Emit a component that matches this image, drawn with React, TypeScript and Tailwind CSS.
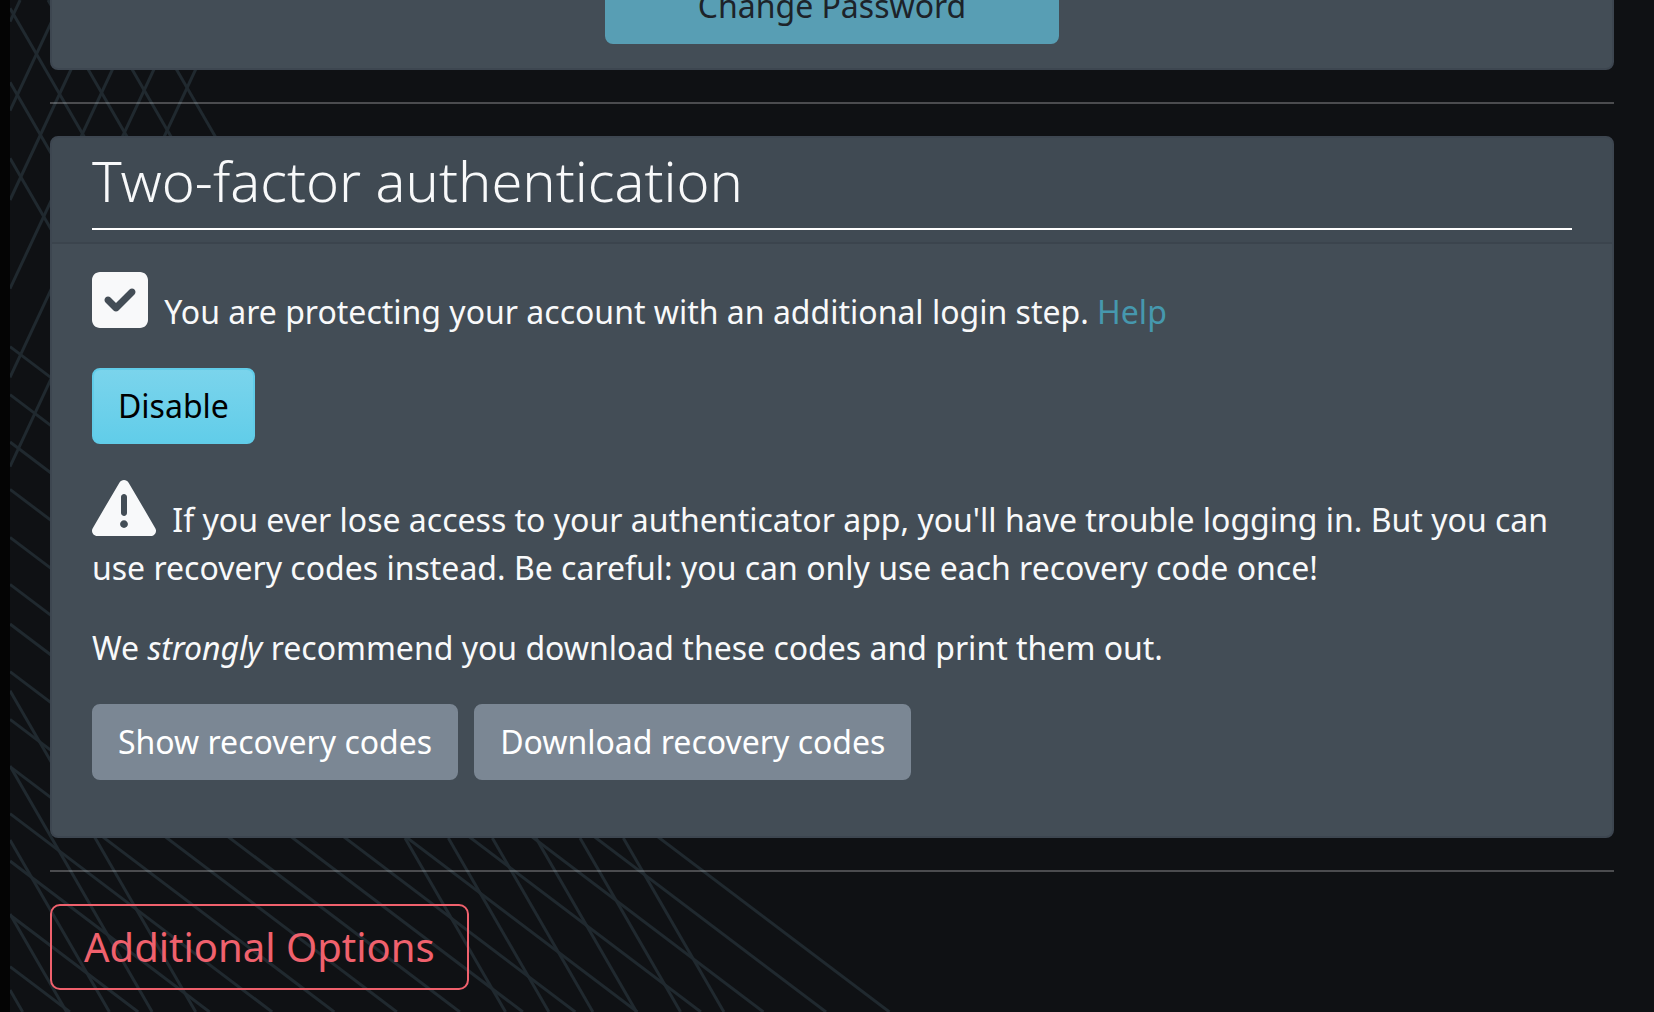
import type { ReactNode } from 'react'

type Line = [number, number, number, number]

// Extend a line of the given slope from a start point down to a final y.
const run = (x: number, y: number, slope: number, endY: number): Line => [
  x,
  y,
  x + (endY - y) / slope,
  endY,
]

const BOTTOM = 3036

const lines: Line[] = [
  // Upper lattice, falling to the right
  ...[25, 247, 475].map((y) => run(30, y, 1.73, 760)),
  ...[144, 276, 409].map((x) => run(x, 0, 1.73, 760)),
  // Upper lattice, falling to the left
  ...[65, 332, 600, 866, 1132, 1400].map((y): Line => [30, y, 30 + y / 2.14, 0]),
  // Shallow sweep
  ...[1040, 1184, 1326, 1468, 1612, 1753, 1872, 2015, 2158, 2300, 2441, 2583, 2745, 2900].map((y) =>
    run(30, y, 0.7565, BOTTOM),
  ),
  // Steep lower lines
  ...[2072, 2298, 2520, 2742, 2970].map((y) => run(30, y, 1.73, BOTTOM)),
  ...[1215, 1345, 1477, 1608, 1740, 1870].map((x) => run(x, 2514, 1.73, BOTTOM)),
]

function Lattice() {
  return (
    <svg
      aria-hidden="true"
      className="pointer-events-none absolute top-0 left-0"
      width="1000"
      height="1012"
      viewBox="0 0 3000 3036"
      stroke="#20292f"
      strokeWidth="9"
    >
      {lines.map(([x1, y1, x2, y2], i) => (
        <line key={i} x1={x1} y1={y1} x2={x2} y2={y2} />
      ))}
    </svg>
  )
}

function CheckIcon() {
  return (
    <svg
      aria-hidden="true"
      className="mr-2 inline h-16 w-14 align-[-8px]"
      viewBox="0 0 448 512"
      fill="currentColor"
    >
      <path d="M384 32C419.3 32 448 60.65 448 96V416C448 451.3 419.3 480 384 480H64C28.65 480 0 451.3 0 416V96C0 60.65 28.65 32 64 32H384zM339.8 211.8C350.7 200.9 350.7 183.1 339.8 172.2C328.9 161.3 311.1 161.3 300.2 172.2L192 280.4L147.8 236.2C136.9 225.3 119.1 225.3 108.2 236.2C97.27 247.1 97.27 264.9 108.2 275.8L172.2 339.8C183.1 350.7 200.9 350.7 211.8 339.8L339.8 211.8z" />
    </svg>
  )
}

function WarningIcon() {
  return (
    <svg
      aria-hidden="true"
      className="mr-2 inline size-16 align-[-8px]"
      viewBox="0 0 512 512"
      fill="currentColor"
    >
      <path d="M506.3 417l-213.3-364c-16.33-28-57.54-28-73.98 0l-213.2 364C-10.59 444.9 9.849 480 42.74 480h426.6C502.1 480 522.6 445 506.3 417zM232 168c0-13.25 10.75-24 24-24S280 154.8 280 168v128c0 13.25-10.75 24-23.1 24S232 309.3 232 296V168zM256 416c-17.36 0-31.44-14.08-31.44-31.44c0-17.36 14.07-31.44 31.44-31.44s31.44 14.08 31.44 31.44C287.4 401.9 273.4 416 256 416z" />
    </svg>
  )
}

function Card({ children }: { children: ReactNode }) {
  return (
    <section className="overflow-hidden rounded-lg border-2 border-[#3d4650] bg-[#434d56]">{children}</section>
  )
}

function SecondaryButton({ children }: { children: ReactNode }) {
  return (
    <button
      type="button"
      className="rounded-lg border-2 border-[#7b8794] bg-[#7b8794] px-6 py-3 text-[32px] leading-[48px] text-white"
    >
      {children}
    </button>
  )
}

export default function App() {
  return (
    <div className="relative flex min-h-screen overflow-hidden bg-[#0f1114] font-['Noto_Sans',sans-serif] text-[32px] leading-[48px] text-[#f8f9fa]">
      <Lattice />
      <div className="relative w-2.5 shrink-0 bg-[#040404]" />
      <main className="relative -mt-10 min-w-0 flex-1 px-10">
        <Card>
          <div className="flex justify-center pt-1.5 pb-6">
            <button
              type="button"
              className="w-[454px] rounded-lg border-2 border-[#589eb4] bg-[#589eb4] py-3 text-[#1d2329]"
            >
              Change Password
            </button>
          </div>
        </Card>

        <hr className="my-8 h-0.5 border-0 bg-white/25" />

        <Card>
          <header className="border-b-2 border-[#3b444d] bg-[#404a53] px-10 pt-2 pb-3">
            <h2 className="border-b-2 border-white pb-3.5 text-[56px] leading-[68px] font-light">
              Two-factor authentication
            </h2>
          </header>
          <div className="flex flex-col items-start gap-8 px-10 pt-6 pb-14">
            <p>
              <CheckIcon /> You are protecting your account with an additional login step.{' '}
              <a href="#help" className="text-[#4698ae]">
                Help
              </a>
            </p>
            <button
              type="button"
              className="rounded-lg border-2 border-[#61cce8] bg-linear-to-b from-[#7ad4ec] to-[#61cde9] px-6 py-3 text-black"
            >
              Disable
            </button>
            <p>
              <WarningIcon /> If you ever lose access to your authenticator app, you'll have trouble logging in. But
              you can use recovery codes instead. Be careful: you can only use each recovery code once!
            </p>
            <p>
              We <em>strongly</em> recommend you download these codes and print them out.
            </p>
            <div className="flex flex-wrap gap-4">
              <SecondaryButton>Show recovery codes</SecondaryButton>
              <SecondaryButton>Download recovery codes</SecondaryButton>
            </div>
          </div>
        </Card>

        <hr className="my-8 h-0.5 border-0 bg-white/25" />

        <button
          type="button"
          className="rounded-[10px] border-2 border-[#f0616d] px-8 py-4 text-[40px] leading-[50px] text-[#f0616d]"
        >
          Additional Options
        </button>
      </main>
    </div>
  )
}
